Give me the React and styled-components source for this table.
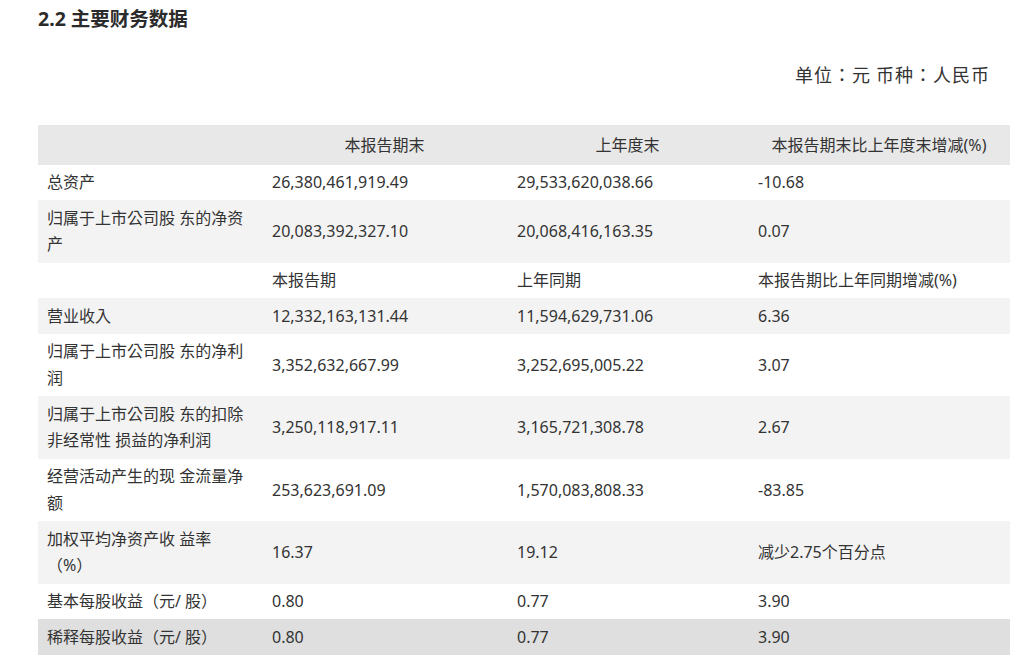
import React from 'react';
import styled, { createGlobalStyle } from 'styled-components';

const GlobalStyle = createGlobalStyle`
    html, body {
        margin: 0;
        padding: 0;
        background: #fff;
    }
    body {
        font-family: "Noto Sans", "Noto Sans CJK SC", sans-serif;
        color: #333;
    }
`;

const Page = styled.div`
    width: 972px;
    padding: 6px 0 0 38px;
`;

const Title = styled.h2`
    margin: 0;
    font-size: 19.5px;
    line-height: 26px;
    font-weight: 700;
    color: #2b2b2b;
`;

const Unit = styled.p`
    margin: 29px 20px 0 0;
    text-align: right;
    font-family: "Noto Sans CJK TC", "Noto Sans CJK SC", sans-serif;
    font-size: 18px;
    letter-spacing: 1px;
    line-height: 26px;
    color: #333;
`;

const Table = styled.table`
    margin-top: 38px;
    width: 972px;
    border-collapse: collapse;
    table-layout: fixed;
    font-size: 16px;
    color: #333;
`;

const tones = {
    head: '#e8e8e8',
    dark: '#dfdfdf',
    gray: '#f3f3f3',
    white: '#fff',
};

const heights = {
    head: '39.5px',
    single: '35.5px',
    double: '62.5px',
};

const Row = styled.tr`
    height: ${({ size }) => heights[size]};
    background: ${({ tone }) => tones[tone]};
`;

const Cell = styled.td`
    padding: 0 10px;
    line-height: 26.5px;
    vertical-align: middle;
    text-align: ${({ center }) => (center ? 'center' : 'left')};
    white-space: nowrap;
`;

const LabelCell = styled(Cell)`
    padding-left: 9px;
    font-family: "Noto Sans", "Noto Sans CJK TC", "Noto Sans CJK SC", sans-serif;
`;

const columns = ['224px', '245px', '241px', '262px'];

const rows = [
    { tone: 'white', label: ['总资产'], values: ['26,380,461,919.49', '29,533,620,038.66', '-10.68'] },
    { tone: 'gray', label: ['归属于上市公司股 东的净资', '产'], values: ['20,083,392,327.10', '20,068,416,163.35', '0.07'] },
    { tone: 'white', label: [''], values: ['本报告期', '上年同期', '本报告期比上年同期增减(%)'] },
    { tone: 'gray', label: ['营业收入'], values: ['12,332,163,131.44', '11,594,629,731.06', '6.36'] },
    { tone: 'white', label: ['归属于上市公司股 东的净利', '润'], values: ['3,352,632,667.99', '3,252,695,005.22', '3.07'] },
    { tone: 'gray', label: ['归属于上市公司股 东的扣除', '非经常性 损益的净利润'], values: ['3,250,118,917.11', '3,165,721,308.78', '2.67'] },
    { tone: 'white', label: ['经营活动产生的现 金流量净', '额'], values: ['253,623,691.09', '1,570,083,808.33', '-83.85'] },
    { tone: 'gray', label: ['加权平均净资产收 益率', '（%）'], values: ['16.37', '19.12', '减少2.75个百分点'] },
    { tone: 'white', label: ['基本每股收益（元/ 股）'], values: ['0.80', '0.77', '3.90'] },
    { tone: 'dark', label: ['稀释每股收益（元/ 股）'], values: ['0.80', '0.77', '3.90'] },
];

const App = () => (
    <Page>
        <GlobalStyle />
        <Title>2.2 主要财务数据</Title>
        <Unit>单位：元 币种：人民币</Unit>
        <Table>
            <colgroup>
                {columns.map((w) => (
                    <col key={w} style={{ width: w }} />
                ))}
            </colgroup>
            <tbody>
                <Row tone="head" size="head">
                    <Cell />
                    <Cell center>本报告期末</Cell>
                    <Cell center>上年度末</Cell>
                    <Cell center>本报告期末比上年度末增减(%)</Cell>
                </Row>
                {rows.map((row, i) => (
                    <Row key={i} tone={row.tone} size={row.label.length > 1 ? 'double' : 'single'}>
                        <LabelCell>
                            {row.label.map((line, j) => (
                                <React.Fragment key={j}>
                                    {j > 0 && <br />}
                                    {line}
                                </React.Fragment>
                            ))}
                        </LabelCell>
                        {row.values.map((v, j) => (
                            <Cell key={j}>{v}</Cell>
                        ))}
                    </Row>
                ))}
            </tbody>
        </Table>
    </Page>
);

export default App;
